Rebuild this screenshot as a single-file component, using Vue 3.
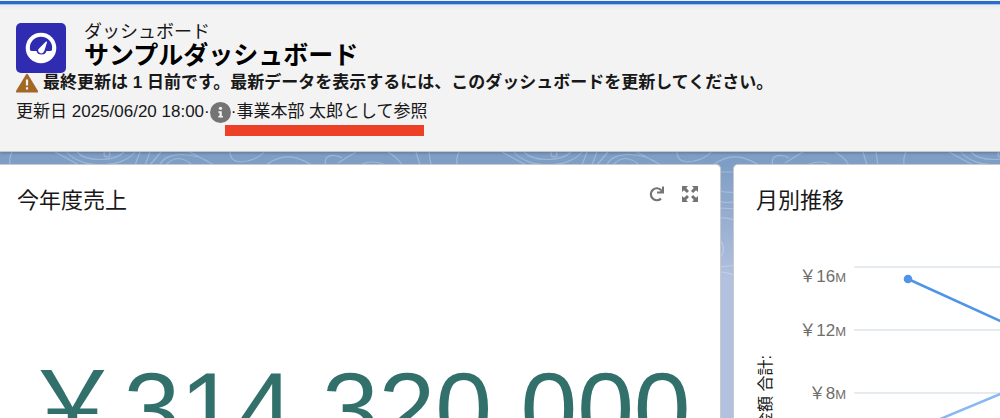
<script setup>
const yen = '\uFFE5'

const gridLines = [
  { y: 50, labelY: 65, amount: yen + '16' },
  { y: 113, labelY: 119, amount: yen + '12' },
  { y: 176, labelY: 182, amount: yen + '8' },
]
</script>

<template>
  <main class="page">
    <svg class="contours" aria-hidden="true">
      <defs>
        <pattern id="contour" width="447" height="420" patternUnits="userSpaceOnUse">
          <g fill="none" stroke="#ffffff" stroke-opacity="0.25" stroke-width="1.2">
            <path d="M12 152Q9 158 10 164M55 152L79 165M67 152C80 169 122 169 135 152M77 152C86 162 114 162 124 152" />
            <circle cx="107" cy="154" r="3" />
            <path d="M140 152L135 165M150 152L145 165M161 152L150 165M160 165C165 151 196 151 213 165M188 151L214 165" />
            <path d="M166 165Q178 152 192 165M230 152C230 164 243 163 254 159Q261 156 264 152" />
            <path d="M266 165C285 151 300 158 312 165M326 165C322 154 335 154 342 158M338 163Q346 158 356 152" />
            <path d="M360 165Q372 159 386 165M388 152Q398 158 402 165M416 152L420 165M429 152L431 165" />
            <path d="M272 172H290M272 191Q280 193 290 192M272 201Q280 204 290 201M272 208L290 209M272 218Q280 217 290 221" />
            <path d="M270 237Q283 249 270 261M272 267L290 265M272 272Q280 272 290 276" />
          </g>
        </pattern>
      </defs>
      <rect width="100%" height="100%" fill="url(#contour)" />
    </svg>

    <header class="header">
      <div class="heading">
        <svg class="logo" viewBox="0 0 50 50" aria-hidden="true">
          <rect width="50" height="50" rx="5" fill="#2f2cb2" />
          <circle cx="25" cy="25" r="15.3" fill="#fff" />
          <path d="M14 27A11.2 11.2 0 1 1 36 27Q35.600 28 34 28H30.500Q29.500 31.500 25.500 31.500Q21.300 31.500 20.500 28H16Q14.400 28 14 27Z" fill="#2f2cb2" />
          <path d="M30.500 18.500Q31.300 18.600 31 19.600L28.300 28Q27.200 30.800 24.500 30.300Q21.300 29.200 22.500 26.300Q22.800 25.600 23.500 24.900L29.700 18.800Z" fill="#fff" />
        </svg>
        <div>
          <p class="kind">ダッシュボード</p>
          <h1 class="title">サンプルダッシュボード</h1>
        </div>
      </div>
      <p class="warning">
        <svg class="warning-icon" viewBox="0 0 22 20" aria-hidden="true">
          <path d="M10 1.500Q11 .2 12 1.500L22 18Q22.300 19.500 21 19.500H1Q-.3 19.500 0 18Z" fill="#a26824" />
          <path d="M11 6.500V12.500M11 14.300V16.500" stroke="#f3f3f3" stroke-width="2.200" />
        </svg>
        <span>最終更新は 1 日前です。最新データを表示するには、このダッシュボードを更新してください。</span>
      </p>
      <p class="meta">
        <span>更新日 2025/06/20 18:00·</span>
        <button class="info" type="button" aria-label="情報">
          <svg viewBox="0 0 21 21" aria-hidden="true">
            <circle cx="10.500" cy="10.500" r="10.500" fill="#747474" />
            <circle cx="10.500" cy="6.300" r="1.600" fill="#f3f3f3" />
            <path d="M8.300 9.200H11.800V14H13V15.600H8.300V14H9.500V10.800H8.300Z" fill="#f3f3f3" />
          </svg>
        </button>
        <span class="viewer">·事業本部 太郎として参照</span>
      </p>
    </header>

    <div class="cards">
      <section class="card">
        <div class="card-head">
          <h2>今年度売上</h2>
          <div class="actions">
            <button type="button" aria-label="更新">
              <svg viewBox="0 0 18 18" aria-hidden="true">
                <path d="M13.300 5.200A6 6 0 1 0 13 13.600" fill="none" stroke="#747474" stroke-width="2.200" />
                <path d="M14 1.500H16V8.600H9V6.600H12L14 4.500Z" fill="#747474" />
              </svg>
            </button>
            <button type="button" aria-label="展開">
              <svg viewBox="0 0 18 18" aria-hidden="true">
                <g fill="#747474">
                  <path d="M1 1H7L5.200 3L8 5.900L5.900 8L3 5.200L1 7Z" />
                  <path d="M17 1H11L12.800 3L10 5.900L12.100 8L15 5.200L17 7Z" />
                  <path d="M1 17H7L5.200 15L8 12.100L5.900 10L3 12.800L1 11Z" />
                  <path d="M17 17H11L12.800 15L10 12.100L12.100 10L15 12.800L17 11Z" />
                </g>
              </svg>
            </button>
          </div>
        </div>
        <p class="metric">{{ yen }}314,320,000</p>
      </section>

      <section class="card">
        <div class="card-head trend-head">
          <h2>月別推移</h2>
        </div>
        <svg class="chart" role="img" aria-label="月別推移">
          <g v-for="line in gridLines" :key="line.y">
            <line class="grid" x1="120" x2="100%" :y1="line.y" :y2="line.y" />
            <text class="tick" x="112" :y="line.labelY" text-anchor="end">{{ line.amount }}<tspan class="unit">M</tspan></text>
          </g>
          <text class="axis" transform="translate(37 138) rotate(-90)" text-anchor="end">金額 合計:</text>
          <path d="M174 62L276 108.500" stroke="#4f94e8" />
          <path d="M199 205L276 173" stroke="#86b8f3" />
          <circle cx="174" cy="62" r="4.300" fill="#4f94e8" />
        </svg>
      </section>
    </div>
  </main>
</template>

<style>
body {
  margin: 0;
}
</style>

<style scoped>
.page {
  position: relative;
  display: flex;
  flex-direction: column;
  height: 100vh;
  overflow: hidden;
  background: linear-gradient(#7f9ec6 0, #7f9ec6 165px, #b2c1df 280px);
  color: #181818;
  font-family: "Liberation Sans", "Noto Sans CJK JP", sans-serif;
  font-size: 17px;
}

p,
h1,
h2 {
  margin: 0;
}

button {
  display: block;
  padding: 0;
  border: 0;
  background: none;
}

.contours {
  position: absolute;
  inset: 0;
  width: 100%;
  height: 100%;
}

.header {
  position: relative;
  padding: 23px 16px 28px;
  border-bottom: 1px solid #c4c7cc;
  background: linear-gradient(#f3f3f3 1px, #2b6ccb 1px, #2b6ccb 4px, #a9c3e8 4px, #a9c3e8 5px, #eaebed 5px, #f3f3f3 10px);
  box-shadow: 0 1px 3px rgba(0, 0, 0, 0.25);
}

.heading {
  display: flex;
  gap: 18px;
}

.logo {
  width: 50px;
  height: 50px;
}

.kind {
  font-size: 18px;
  line-height: 18px;
}

.title {
  color: #000;
  font-size: 25px;
  font-weight: 700;
  line-height: 28px;
}

.warning {
  display: flex;
  gap: 5px;
  font-weight: 700;
  line-height: 20px;
  white-space: nowrap;
}

.warning-icon {
  flex: none;
  width: 22px;
  height: 20px;
}

.meta {
  display: flex;
  align-items: center;
  margin-top: 8px;
  line-height: 22px;
  white-space: nowrap;
}

.info svg {
  display: block;
  width: 21px;
  height: 21px;
}

.viewer {
  position: relative;
}

.viewer::after {
  position: absolute;
  top: 24px;
  right: 4px;
  left: -6px;
  height: 11px;
  background: #ec4126;
  content: "";
}

.cards {
  position: relative;
  display: grid;
  flex: 1;
  grid-template-columns: 72.1% 1fr;
  gap: 12px;
  padding-top: 12px;
}

.card {
  min-width: 0;
  border: 1px solid #c9c9c9;
  border-bottom: 0;
  border-radius: 5px 5px 0 0;
  background: #fff;
}

.card:first-child {
  border-left: 0;
  border-top-left-radius: 0;
}

.card:last-child {
  border-right: 0;
  border-top-right-radius: 0;
}

.card-head {
  display: flex;
  align-items: flex-start;
  justify-content: space-between;
  padding: 20px 21px 0 17px;
}

.trend-head {
  padding-left: 22px;
}

h2 {
  font-size: 22px;
  font-weight: 400;
  line-height: 32px;
}

.actions {
  display: flex;
  gap: 15px;
}

.actions svg {
  display: block;
  width: 18px;
  height: 18px;
}

.metric {
  margin-top: 142px;
  padding-right: 8px;
  color: #32706c;
  font-size: 102px;
  line-height: 101px;
  text-align: center;
  white-space: nowrap;
}

.chart {
  display: block;
  width: 100%;
  height: 220px;
}

.chart path {
  stroke-width: 2.5;
}

.grid {
  stroke: #e6ebf0;
  stroke-width: 2;
}

.tick {
  fill: #706e6b;
  font-size: 17px;
}

.unit {
  font-size: 13px;
}

.axis {
  fill: #181818;
  font-size: 16px;
}
</style>
